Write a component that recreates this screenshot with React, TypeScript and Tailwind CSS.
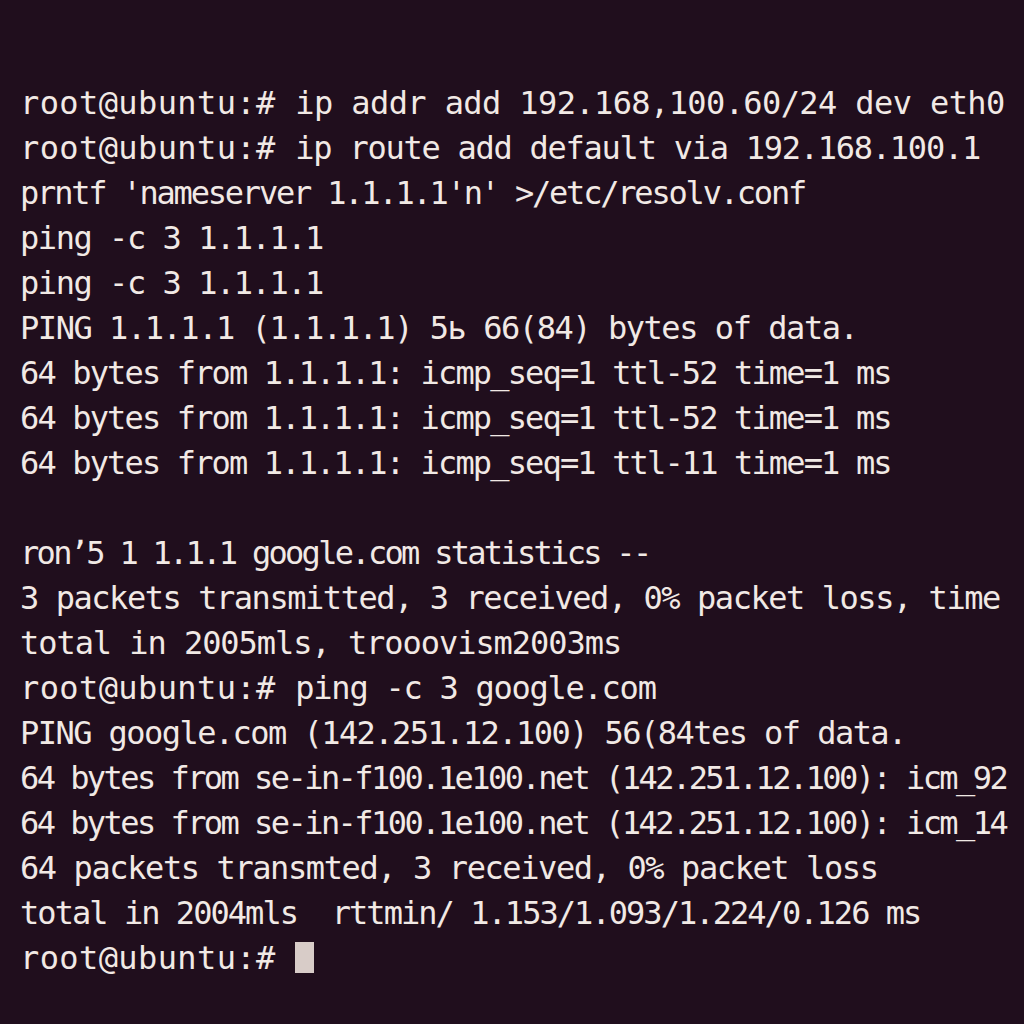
import React from "react";

type Line = { prompt?: boolean; text: string; cls: string; cursor?: boolean };

const lines: Line[] = [
  { prompt: true, text: "ip addr add 192.168,100.60/24 dev eth0", cls: "tracking-[-0.6px]" },
  { prompt: true, text: "ip route add default via 192.168.100.1", cls: "tracking-[-1.25px]" },
  { text: "prntf 'nameserver 1.1.1.1'n' >/etc/resolv.conf", cls: "tracking-[-2.2px]" },
  { text: "ping -c 3 1.1.1.1", cls: "tracking-[-1.45px]" },
  { text: "ping -c 3 1.1.1.1", cls: "tracking-[-1.45px]" },
  { text: "PING 1.1.1.1 (1.1.1.1) 5ь 66(84) bytes of data.", cls: "tracking-[-1.45px]" },
  { text: "64 bytes from 1.1.1.1: icmp_seq=1 ttl-52 time=1 ms", cls: "tracking-[-1.85px]" },
  { text: "64 bytes from 1.1.1.1: icmp_seq=1 ttl-52 time=1 ms", cls: "tracking-[-1.85px]" },
  { text: "64 bytes from 1.1.1.1: icmp_seq=1 ttl-11 time=1 ms", cls: "tracking-[-1.85px]" },
  { text: "\u00a0", cls: "" },
  { text: "ron\u02bc5 1 1.1.1 google.com statistics --", cls: "tracking-[-2.7px]" },
  { text: "3 packets transmitted, 3 received, 0% packet loss, time", cls: "tracking-[-1.45px]" },
  { text: "total in 2005mls, trooovism2003ms", cls: "tracking-[-1.05px]" },
  { prompt: true, text: "ping -c 3 google.com", cls: "tracking-[-1.25px]" },
  { text: "PING google.com (142.251.12.100) 56(84tes of data.", cls: "tracking-[-1.55px]" },
  { text: "64 bytes from se-in-f100.1e100.net (142.251.12.100): icm_92", cls: "tracking-[-2.55px]" },
  { text: "64 bytes from se-in-f100.1e100.net (142.251.12.100): icm_14", cls: "tracking-[-2.55px]" },
  { text: "64 packets transmted, 3 received, 0% packet loss", cls: "tracking-[-1.4px]" },
  { text: "total in 2004mls  rttmin/ 1.153/1.093/1.224/0.126 ms", cls: "tracking-[-1.95px]" },
  { prompt: true, text: "", cls: "", cursor: true },
];

export default function App() {
  return (
    <div className="w-[1024px] h-[1024px] overflow-hidden bg-[#200e1d] text-[#f1e9e5] pl-[20px] pt-[81px] font-['DejaVu_Sans_Mono',monospace] text-[32px] leading-[45px]">
      <div className="flex flex-col">
        {lines.map((l, i) => (
          <div key={i} className="whitespace-pre flex items-center h-[45px]">
            {l.prompt && <span className="tracking-[0.4px]">root@ubuntu:# </span>}
            <span className={l.cls}>{l.text}</span>
            {l.cursor && <span className="inline-block w-[19px] h-[31px] bg-[#d8ccc8] -mt-[2px]" />}
          </div>
        ))}
      </div>
    </div>
  );
}
